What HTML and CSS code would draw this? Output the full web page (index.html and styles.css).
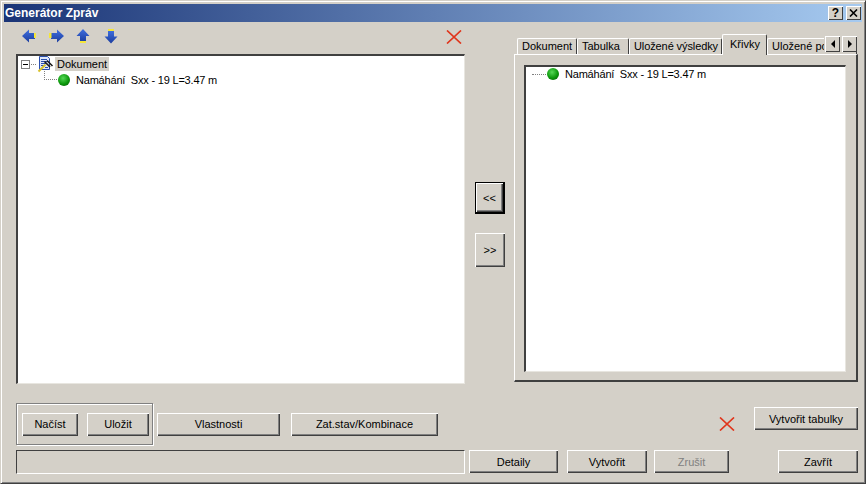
FILE: index.html
```html
<!DOCTYPE html>
<html lang="cs">
<head>
    <meta charset="UTF-8">
    <title>Generátor Zpráv</title>
    <link rel="stylesheet" href="styles.css">
</head>
<body>
    <div class="window">
        <div class="titlebar">
            <span class="title-text">Generátor Zpráv</span>
            <div class="title-buttons">
                <span class="title-btn">?</span>
                <span class="title-btn close">
                    <svg width="9" height="8" viewBox="0 0 9 8"><path d="M1 0.5 L8 7.5 M8 0.5 L1 7.5" stroke="#000" stroke-width="1.6" fill="none"/></svg>
                </span>
            </div>
        </div>

        <div class="main">
            <div class="left-col">
                <div class="toolbar">
                    <svg class="arrows" width="100" height="17" viewBox="0 0 100 17">
                        <defs>
                            <linearGradient id="blue" x1="0" y1="0" x2="0" y2="1">
                                <stop offset="0" stop-color="#3f6fe0"/>
                                <stop offset="1" stop-color="#1c3d9e"/>
                            </linearGradient>
                        </defs>
                        <path d="M1 8 L8 1.500 V5 H14 V11 H8 V14.500 Z" fill="url(#blue)"/>
                        <rect x="13" y="5" width="2" height="5" fill="#f5e63a"/>
                        <path d="M43 8 L36 1.500 V5 H30 V11 H36 V14.500 Z" fill="url(#blue)"/>
                        <rect x="28" y="5" width="2.500" height="5" fill="#f5e63a"/>
                        <path d="M62 1 L68.500 8 H65 V14 H59 V8 H55.500 Z" fill="url(#blue)"/>
                        <rect x="59" y="13" width="6" height="2" fill="#f5e63a"/>
                        <path d="M90 15.500 L96.500 8.500 H93 V2.500 H87 V8.500 H83.500 Z" fill="url(#blue)"/>
                        <rect x="87" y="1" width="6" height="2" fill="#f5e63a"/>
                    </svg>
                    <svg class="red-x" width="16" height="14" viewBox="0 0 16 14"><path d="M1 0.500 L15 13.500 M15 0.500 L1 13.500" stroke="#e0351c" stroke-width="1.700" fill="none"/></svg>
                </div>

                <div class="sunken tree tree-left">
                    <div class="tree-row">
                        <span class="expander"></span>
                        <span class="dots-h short"></span>
                        <svg class="doc-icon" width="17" height="17" viewBox="0 0 17 17">
                            <path d="M2.500 0.500 H10.500 L12.500 2.500 V13.500 H2.500 Z" fill="#dfe8fb" stroke="#2a4fae"/>
                            <path d="M4 3.500 H10 M4 5.500 H11 M4 7.500 H9 M4 9.500 H7 M8 11.500 H11" stroke="#2a4fae"/>
                            <path d="M1.500 15.500 L8.500 8.500" stroke="#d8c22a" stroke-width="2"/>
                            <path d="M7.500 5.500 L13 11 M10 4.500 L15.500 10" stroke="#1c1c1c" stroke-width="1.600"/>
                        </svg>
                        <span class="label selected">Dokument</span>
                    </div>
                    <div class="tree-row child">
                        <span class="dots-l"></span>
                        <span class="ball"></span>
                        <span class="label item">Namáhání&nbsp; Sxx - 19 L=3.47 m</span>
                    </div>
                </div>
            </div>

            <div class="mid-col">
                <button class="btn default move-btn">&lt;&lt;</button>
                <button class="btn move-btn">&gt;&gt;</button>
            </div>

            <div class="right-col">
                <div class="tabs">
                    <span class="tab t1">Dokument</span>
                    <span class="tab t2">Tabulka</span>
                    <span class="tab t3">Uložené výsledky</span>
                    <span class="tab active t4">Křivky</span>
                    <span class="tab t5">Uložené pohledy</span>
                    <div class="tab-scroll">
                        <span class="scroll-btn"><i class="tri-left"></i></span>
                        <span class="scroll-btn"><i class="tri-right"></i></span>
                    </div>
                </div>
                <div class="tab-panel">
                    <div class="sunken tree tree-right">
                        <div class="tree-row">
                            <span class="dots-h"></span>
                            <span class="ball"></span>
                            <span class="label item">Namáhání&nbsp; Sxx - 19 L=3.47 m</span>
                        </div>
                    </div>
                </div>
            </div>
        </div>

        <div class="actions">
            <div class="group-box">
                <button class="btn b-nacist">Načíst</button>
                <button class="btn b-ulozit">Uložit</button>
            </div>
            <button class="btn b-vlastnosti">Vlastnosti</button>
            <button class="btn b-zat">Zat.stav/Kombinace</button>
            <svg class="red-x small" width="16" height="14" viewBox="0 0 16 14"><path d="M1 0.500 L15 13.500 M15 0.500 L1 13.500" stroke="#e0351c" stroke-width="1.700" fill="none"/></svg>
            <button class="btn b-tabulky">Vytvořit tabulky</button>
        </div>

        <div class="status-row">
            <div class="status-field"></div>
            <button class="btn b-detaily">Detaily</button>
            <button class="btn b-vytvorit">Vytvořit</button>
            <button class="btn b-zrusit" disabled>Zrušit</button>
            <button class="btn b-zavrit">Zavřít</button>
        </div>
    </div>
</body>
</html>
```

FILE: styles.css
```css
:root {
    --face: #d4d0c8;
    --shadow: #808080;
    --dark: #404040;
}

body {
    margin: 0;
    font-family: "Liberation Sans", Arial, sans-serif;
    font-size: 11px;
    color: #000;
}

.window {
    width: 866px;
    height: 484px;
    box-sizing: border-box;
    padding: 3px 3px 2px 3px;
    background: var(--face);
    border-top: 1px solid var(--face);
    border-left: 1px solid var(--face);
    border-right: 1px solid var(--dark);
    border-bottom: 1px solid var(--dark);
    box-shadow: inset 1px 1px 0 #fff, inset -1px -1px 0 var(--shadow);
    overflow: hidden;
}

.titlebar {
    height: 18px;
    display: flex;
    align-items: center;
    justify-content: space-between;
    padding: 0 1px 0 1px;
    background: linear-gradient(to right, #1a3476, #a6caf0);
}

.title-text {
    color: #fff;
    font-weight: bold;
    font-size: 12px;
}

.title-buttons {
    display: flex;
    gap: 3px;
}

.title-btn {
    width: 15px;
    height: 14px;
    display: flex;
    align-items: center;
    justify-content: center;
    background: var(--face);
    font-weight: bold;
    font-size: 12px;
    box-shadow: inset 1px 1px 0 #fff, inset -1px -1px 0 var(--dark);
}

.main {
    display: flex;
    padding-left: 12px;
}

.left-col {
    width: 449px;
}

.toolbar {
    height: 32px;
    display: flex;
    align-items: flex-start;
    justify-content: space-between;
    padding: 6px 3px 0 5px;
    box-sizing: border-box;
}

.arrows,
.red-x {
    display: block;
}

.toolbar .red-x {
    margin: 2px 0 0 0;
}

.sunken {
    box-sizing: border-box;
    background: #fff;
    border-top: 2px solid var(--dark);
    border-left: 2px solid var(--dark);
    border-right: 1px solid #e8e6e0;
    border-bottom: 1px solid #e8e6e0;
}

.tree-left {
    height: 330px;
    padding: 0 0 0 3px;
}

.tree-row {
    height: 16px;
    display: flex;
    align-items: center;
    white-space: nowrap;
}

.expander {
    width: 9px;
    height: 9px;
    box-sizing: border-box;
    border: 1px solid #808080;
    background: linear-gradient(#000, #000) center / 5px 1px no-repeat;
}

.dots-h {
    width: 14px;
    height: 0;
    border-top: 1px dotted #808080;
    margin: 0 2px 0 7px;
}

.dots-h.short {
    width: 5px;
    margin: 0 1px;
}

.doc-icon {
    flex: none;
}

.label {
    margin-left: 1px;
    padding: 0 2px;
    line-height: 14px;
}

.selected {
    background: var(--face);
}

.item {
    letter-spacing: -0.2px;
}

.child {
    padding-left: 23px;
}

.dots-l {
    width: 13px;
    height: 9px;
    margin: -9px 1px 0 0;
    border-left: 1px dotted #808080;
    border-bottom: 1px dotted #808080;
    box-sizing: border-box;
}

.ball {
    flex: none;
    width: 12px;
    height: 12px;
    border-radius: 50%;
    background: radial-gradient(circle at 42% 35%, #55d855, #0c980c 55%, #045004);
}

.tree-row .item {
    margin-left: 4px;
}

.mid-col {
    width: 30px;
    margin: 0 9px 0 10px;
    padding-top: 160px;
}

.btn {
    display: block;
    box-sizing: border-box;
    padding: 0;
    border: 0;
    background: var(--face);
    font-family: inherit;
    font-size: 11px;
    color: #000;
    box-shadow: inset 1px 1px 0 #fff, inset -1px -1px 0 var(--dark), inset -2px -2px 0 var(--shadow);
}

.btn:disabled {
    color: #808080;
}

.move-btn {
    width: 30px;
    height: 32px;
    margin-bottom: 19px;
}

.move-btn + .move-btn {
    height: 34px;
}

.btn.default {
    border: 1px solid #000;
    border-bottom-width: 2px;
    border-right-width: 2px;
}

.right-col {
    width: 344px;
    padding-top: 12px;
}

.tabs {
    position: relative;
    height: 20px;
    display: flex;
    align-items: flex-end;
    padding-left: 3px;
}

.tab {
    box-sizing: border-box;
    height: 16px;
    line-height: 15px;
    flex: none;
    padding: 0 0 0 4px;
    background: var(--face);
    border-top: 1px solid #fff;
    border-left: 1px solid #fff;
    border-right: 1px solid var(--dark);
    border-radius: 2px 2px 0 0;
    white-space: nowrap;
}

.t1 { width: 60px; }
.t2 { width: 52px; }
.t3 { width: 93px; letter-spacing: -0.1px; }

.tab.active {
    width: 45px;
    height: 21px;
    margin-bottom: -1px;
    padding-left: 7px;
    line-height: 18px;
    position: relative;
    z-index: 1;
}

.t5 {
    width: 90px;
}

.tab-scroll {
    position: absolute;
    right: 1px;
    top: 2px;
    display: flex;
    gap: 2px;
    padding-left: 1px;
    background: var(--face);
}

.scroll-btn {
    width: 15px;
    height: 16px;
    display: flex;
    align-items: center;
    justify-content: center;
    background: var(--face);
    box-shadow: inset 1px 1px 0 #fff, inset -1px -1px 0 var(--dark);
}

.tri-left {
    border: 4px solid transparent;
    border-left: 0;
    border-right-color: #000;
}

.tri-right {
    border: 4px solid transparent;
    border-right: 0;
    border-left-color: #000;
}

.tab-panel {
    box-sizing: border-box;
    height: 328px;
    padding: 10px 10px 8px 9px;
    background: var(--face);
    border-top: 1px solid #fff;
    border-left: 1px solid #fff;
    border-right: 2px solid var(--dark);
    border-bottom: 2px solid var(--dark);
}

.tree-right {
    height: 100%;
    padding: 0 0 0 8px;
}

.tree-right .tree-row {
    margin-top: -1px;
}

.tree-right .dots-h {
    margin: 0 1px 0 -2px;
}

.actions {
    display: flex;
    align-items: center;
    height: 42px;
    margin-top: 19px;
    padding-left: 12px;
}

.group-box {
    width: 137px;
    height: 42px;
    box-sizing: border-box;
    display: flex;
    align-items: center;
    padding: 0 0 0 5px;
    gap: 9px;
    border: 1px solid var(--shadow);
    box-shadow: 1px 1px 0 #fff, inset 1px 1px 0 #fff;
}

.b-nacist { width: 56px; height: 23px; }
.b-ulozit { width: 62px; height: 23px; }
.b-vlastnosti { width: 123px; height: 23px; margin-left: 4px; }
.b-zat { width: 147px; height: 23px; margin-left: 11px; }

.actions .small {
    margin: 0 0 0 281px;
}

.b-tabulky {
    width: 104px;
    height: 23px;
    margin: -11px 0 0 19px;
}

.status-row {
    display: flex;
    align-items: flex-start;
    height: 24px;
    margin-top: 5px;
    padding-left: 12px;
}

.status-field {
    width: 449px;
    height: 24px;
    box-sizing: border-box;
    border-top: 1px solid var(--dark);
    border-left: 1px solid var(--dark);
    border-right: 1px solid #fff;
    border-bottom: 1px solid #fff;
}

.b-detaily { width: 89px; height: 23px; margin-left: 4px; }
.b-vytvorit { width: 80px; height: 23px; margin-left: 9px; }
.b-zrusit { width: 75px; height: 23px; margin-left: 7px; }
.b-zavrit { width: 80px; height: 23px; margin-left: 49px; }
```
